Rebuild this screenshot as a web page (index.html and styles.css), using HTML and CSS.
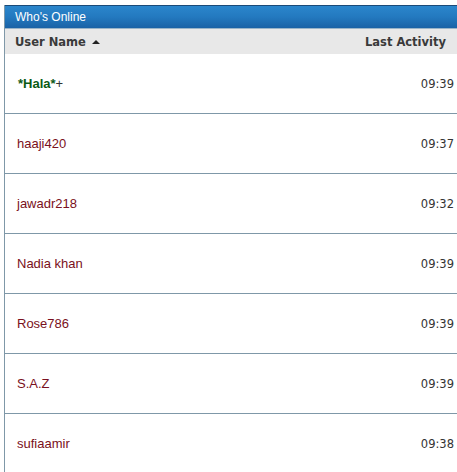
FILE: index.html
```html
<!DOCTYPE html>
<html>
<head>
<meta charset="utf-8">
<link rel="stylesheet" href="styles.css">
</head>
<body>
<div class="panel">
  <div class="title">Who's Online</div>
  <div class="colhead">
    <span class="col-name">User Name <span class="arrow"></span></span>
    <span class="col-time">Last Activity</span>
  </div>
  <div class="row"><span class="name admin">*Hala*<span class="plus">+</span></span><span class="time">09:39</span></div>
  <div class="row"><span class="name">haaji420</span><span class="time">09:37</span></div>
  <div class="row"><span class="name">jawadr218</span><span class="time">09:32</span></div>
  <div class="row"><span class="name">Nadia khan</span><span class="time">09:39</span></div>
  <div class="row"><span class="name">Rose786</span><span class="time">09:39</span></div>
  <div class="row"><span class="name">S.A.Z</span><span class="time">09:39</span></div>
  <div class="row"><span class="name">sufiaamir</span><span class="time">09:38</span></div>
</div>
</body>
</html>
```
FILE: styles.css
```css
html, body {
  margin: 0;
  padding: 0;
  background: #ffffff;
  overflow: hidden;
}
body {
  padding: 5px 0 0 4px;
  font-family: "DejaVu Sans", Verdana, sans-serif;
}
.panel {
  border-left: 1px solid #7f98a8;
}
.title {
  height: 22px;
  border-top: 1px solid #1b4a78;
  background: linear-gradient(to bottom, #2b86cc 0%, #2379bf 50%, #1a62a6 100%);
  color: #ffffff;
  font-family: "Liberation Sans", Arial, sans-serif;
  font-size: 12px;
  line-height: 22px;
  padding-left: 10px;
  border-bottom: 1px solid #9ab4c8;
}
.colhead {
  height: 25px;
  background: #e8e8e8;
  display: flex;
  justify-content: space-between;
  align-items: center;
  font-family: "DejaVu Sans", Verdana, sans-serif;
  font-weight: bold;
  font-size: 11.5px;
  color: #3a3a3a;
  padding: 0 11px 0 10px;
}
.col-name {
  display: flex;
  align-items: center;
  gap: 6px;
}
.arrow {
  width: 0;
  height: 0;
  border-left: 4px solid transparent;
  border-right: 4px solid transparent;
  border-bottom: 4px solid #222222;
}
.row {
  height: 59px;
  border-bottom: 1px solid #7f98a8;
  display: flex;
  justify-content: space-between;
  align-items: center;
  padding: 0 3px 0 12px;
  font-family: "Liberation Sans", Arial, sans-serif;
  font-size: 13px;
}
.name {
  color: #7a1020;
}
.name.admin {
  color: #0b5a14;
  font-weight: bold;
  padding-left: 1px;
}
.plus {
  color: #333333;
  font-weight: normal;
}
.time {
  color: #333333;
  font-family: "DejaVu Sans", Verdana, sans-serif;
  font-size: 11.5px;
}
```
